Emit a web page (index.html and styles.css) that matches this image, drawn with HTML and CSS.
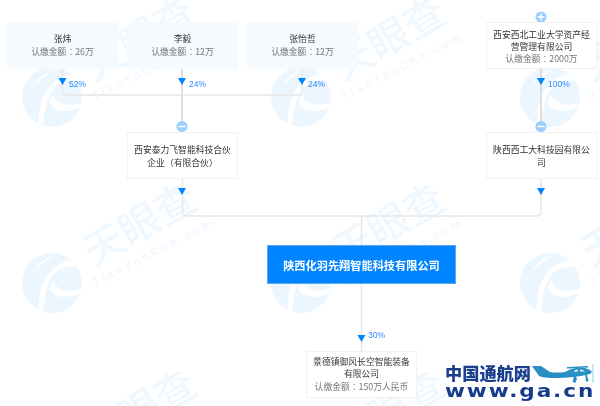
FILE: index.html
```html
<!DOCTYPE html>
<html lang="zh-CN">
<head>
<meta charset="utf-8">
<title>股权结构图</title>
<link rel="stylesheet" href="styles.css">
</head>
<body>
<main class="canvas">
  <svg class="layer" width="600" height="406" aria-hidden="true">
    <defs>
      <pattern id="wm" patternUnits="userSpaceOnUse" width="249" height="186">
        <circle cx="52" cy="97" r="30" class="wm-fill"/>
        <g transform="translate(52 97)" class="wm-cut">
          <path d="M-19,-11 Q-11,-24 3,-28 Q-9,-20 -19,-11Z"/>
          <path d="M-13,28 Q-15,-6 8,-19 Q16,-25 24,-21 L27,-16 Q12,-18 3,-10 Q-6,-2 -9,29Z"/>
          <path d="M1,-2 Q7,12 30,6 L29,10 Q4,20 -3,5Z"/>
        </g>
        <text class="wm-cn" transform="translate(147 51) rotate(-30)" text-anchor="middle">天眼查</text>
        <text class="wm-en" transform="translate(155 70) rotate(-27)" text-anchor="middle">TianYanCha.com</text>
      </pattern>
    </defs>
    <rect width="600" height="406" fill="url(#wm)"/>
    <g class="link">
      <path d="M62.5 69V91a4 4 0 0 0 4 4H298a4 4 0 0 0 4 -4V69"/>
      <path d="M182.5 178V212a4 4 0 0 0 4 4H537a4 4 0 0 0 4 -4V178"/>
      <path d="M361.5 216V351"/>
    </g>
    <g class="link-thick">
      <path d="M182 69V132"/>
      <path d="M541 69V132"/>
    </g>
    <g class="arrow">
      <path d="M58.500 78h8l-4 7z"/>
      <path d="M178 78h8l-4 7z"/>
      <path d="M298 78h8l-4 7z"/>
      <path d="M537 78h8l-4 7z"/>
      <path d="M178 188h8l-4 7z"/>
      <path d="M537 188h8l-4 7z"/>
      <path d="M357.500 335h8l-4 7z"/>
    </g>
    <g class="toggle">
      <circle cx="182" cy="126.500" r="5.500"/>
      <circle cx="541" cy="126.500" r="5.500"/>
      <circle cx="541" cy="17" r="5.500"/>
    </g>
    <g class="toggle-mark">
      <path d="M178.500 126.500h7"/>
      <path d="M537.500 126.500h7"/>
      <path d="M537.500 17h7M541 13.500v7"/>
    </g>
  </svg>

  <div class="node node-share n1"><p>张炜</p><p class="sub" lang="zh-Hant">认缴金额：26万</p></div>
  <div class="node node-share n2"><p>李毅</p><p class="sub" lang="zh-Hant">认缴金额：12万</p></div>
  <div class="node node-share n3"><p>张怡哲</p><p class="sub" lang="zh-Hant">认缴金额：12万</p></div>
  <div class="node n4"><p>西安西北工业大学资产经营管理有限公司</p><p class="sub" lang="zh-Hant">认缴金额：2000万</p></div>
  <div class="node n5"><p>西安泰力飞智能科技合伙企业（有限合伙）</p></div>
  <div class="node n6"><p>陕西西工大科技园有限公司</p></div>
  <div class="main-node">陕西化羽先翔智能科技有限公司</div>
  <div class="node n7"><p>景德镇御风长空智能装备有限公司</p><p class="sub" lang="zh-Hant">认缴金额：150万人民币</p></div>

  <span class="pct p1">52%</span>
  <span class="pct p2">24%</span>
  <span class="pct p3">24%</span>
  <span class="pct p4">100%</span>
  <span class="pct p5">30%</span>

  <div class="brand">
    <div class="brand-top">
      <span class="brand-cn">中国通航网</span>
      <svg class="plane" width="66" height="24" viewBox="0 0 66 24" aria-hidden="true">
        <path class="plane-body" d="M1,2 L10,2 L19,8 Q27,9 34,8 L40,5 Q47,3 54,4 L59,6 L61,8 L59,10 Q44,14 24,14 Q13,14 8,12Z"/>
        <path class="plane-body" d="M36,3 L57,2 L57,3.500 L36,4.500Z"/>
        <path class="plane-body" d="M43,12 L42,16 L46,16 L45,12Z M54,11 L55,15 L57,15 L56,11Z"/>
        <circle class="plane-body" cx="43.500" cy="17" r="1.800"/>
        <circle class="plane-body" cx="56" cy="16" r="1.500"/>
        <path class="plane-glass" d="M44,6 L47,5.500 L47,7.500 L43,8Z M49,5.500 L52,6 L54,7.500 L49,7.500Z"/>
        <path class="plane-prop" d="M62,0 L62,19"/>
      </svg>
    </div>
    <div class="brand-url">www.ga.cn</div>
  </div>
</main>
</body>
</html>
```
FILE: styles.css
```css
* { box-sizing: border-box; }
html, body { margin: 0; padding: 0; background: #fff; }
body { font-family: "Noto Sans CJK SC", "Liberation Sans", sans-serif; }
p { margin: 0; }

.canvas { position: relative; width: 600px; height: 406px; overflow: hidden; background: #fff; }
.layer { position: absolute; left: 0; top: 0; }

.wm-fill { fill: #ecf6ff; }
.wm-cut path { fill: #fff; }
.wm-cn { font: 500 41px "Noto Sans CJK SC", sans-serif; fill: #f0f8ff; }
.wm-en { font: 700 12px "Liberation Sans", sans-serif; letter-spacing: 2.800px; fill: #f1f8ff; }

.link path { fill: none; stroke: #e6e6e6; stroke-width: 1.500; }
.link-thick path { fill: none; stroke: #dedede; stroke-width: 2; }
.arrow path { fill: #0084ff; }
.toggle circle { fill: #99ceff; }
.toggle-mark path { fill: none; stroke: #fff; stroke-width: 1.500; }

.node {
  position: absolute;
  width: 111px;
  height: 47px;
  padding: 0 5px;
  display: flex;
  flex-direction: column;
  justify-content: center;
  background: #fff;
  border: 1px solid #f2f2f2;
  color: #333;
  font-size: 8.800px;
  line-height: 12.300px;
  text-align: center;
  filter: blur(.25px);
}
.node-share { background: #f5faff; border-color: #f5faff; }
.sub { color: #777; font-family: "Noto Sans CJK TC", "Liberation Sans", sans-serif; }

.n1 { left: 7px; top: 22px; }
.n2 { left: 127px; top: 22px; }
.n3 { left: 247px; top: 22px; }
.n4 { left: 486px; top: 22px; padding-top: 3px; }
.n5 { left: 127px; top: 132px; padding-top: 2px; }
.n6 { left: 486px; top: 132px; padding-top: 2px; }
.n7 { left: 306px; top: 351px; }

.main-node {
  position: absolute;
  left: 267px;
  top: 245px;
  width: 189px;
  height: 39px;
  display: flex;
  align-items: center;
  justify-content: center;
  background: #0084ff;
  border: 1px solid #5aa9f0;
  color: #fff;
  font-size: 11.200px;
  font-weight: 700;
  filter: blur(.2px);
}

.pct {
  position: absolute;
  color: #2f88ff;
  font: 8.500px/11px "Liberation Sans", sans-serif;
  filter: blur(.2px);
}
.p1 { left: 69px; top: 79px; }
.p2 { left: 189px; top: 79px; }
.p3 { left: 308px; top: 79px; }
.p4 { left: 548px; top: 79px; }
.p5 { left: 368px; top: 330px; }

.brand {
  position: absolute;
  left: 445px;
  top: 364px;
  width: 152px;
  filter: blur(.2px);
}
.brand-top { display: flex; align-items: flex-start; height: 20px; }
.brand-cn { color: #1b3f8f; font-size: 17.200px; line-height: 18px; font-weight: 900; white-space: nowrap; }
.plane { flex: none; overflow: visible; }
.plane-body { fill: #2a8fc4; }
.plane-glass { fill: #dff1fa; }
.plane-prop { stroke: #a9d4ea; stroke-width: 1.200; }
.brand-url {
  color: #163a8c;
  font: 700 17px/15px "DejaVu Sans", sans-serif;
  letter-spacing: 1.500px;
  white-space: nowrap;
  transform: scaleX(1.27);
  transform-origin: left center;
}
```
